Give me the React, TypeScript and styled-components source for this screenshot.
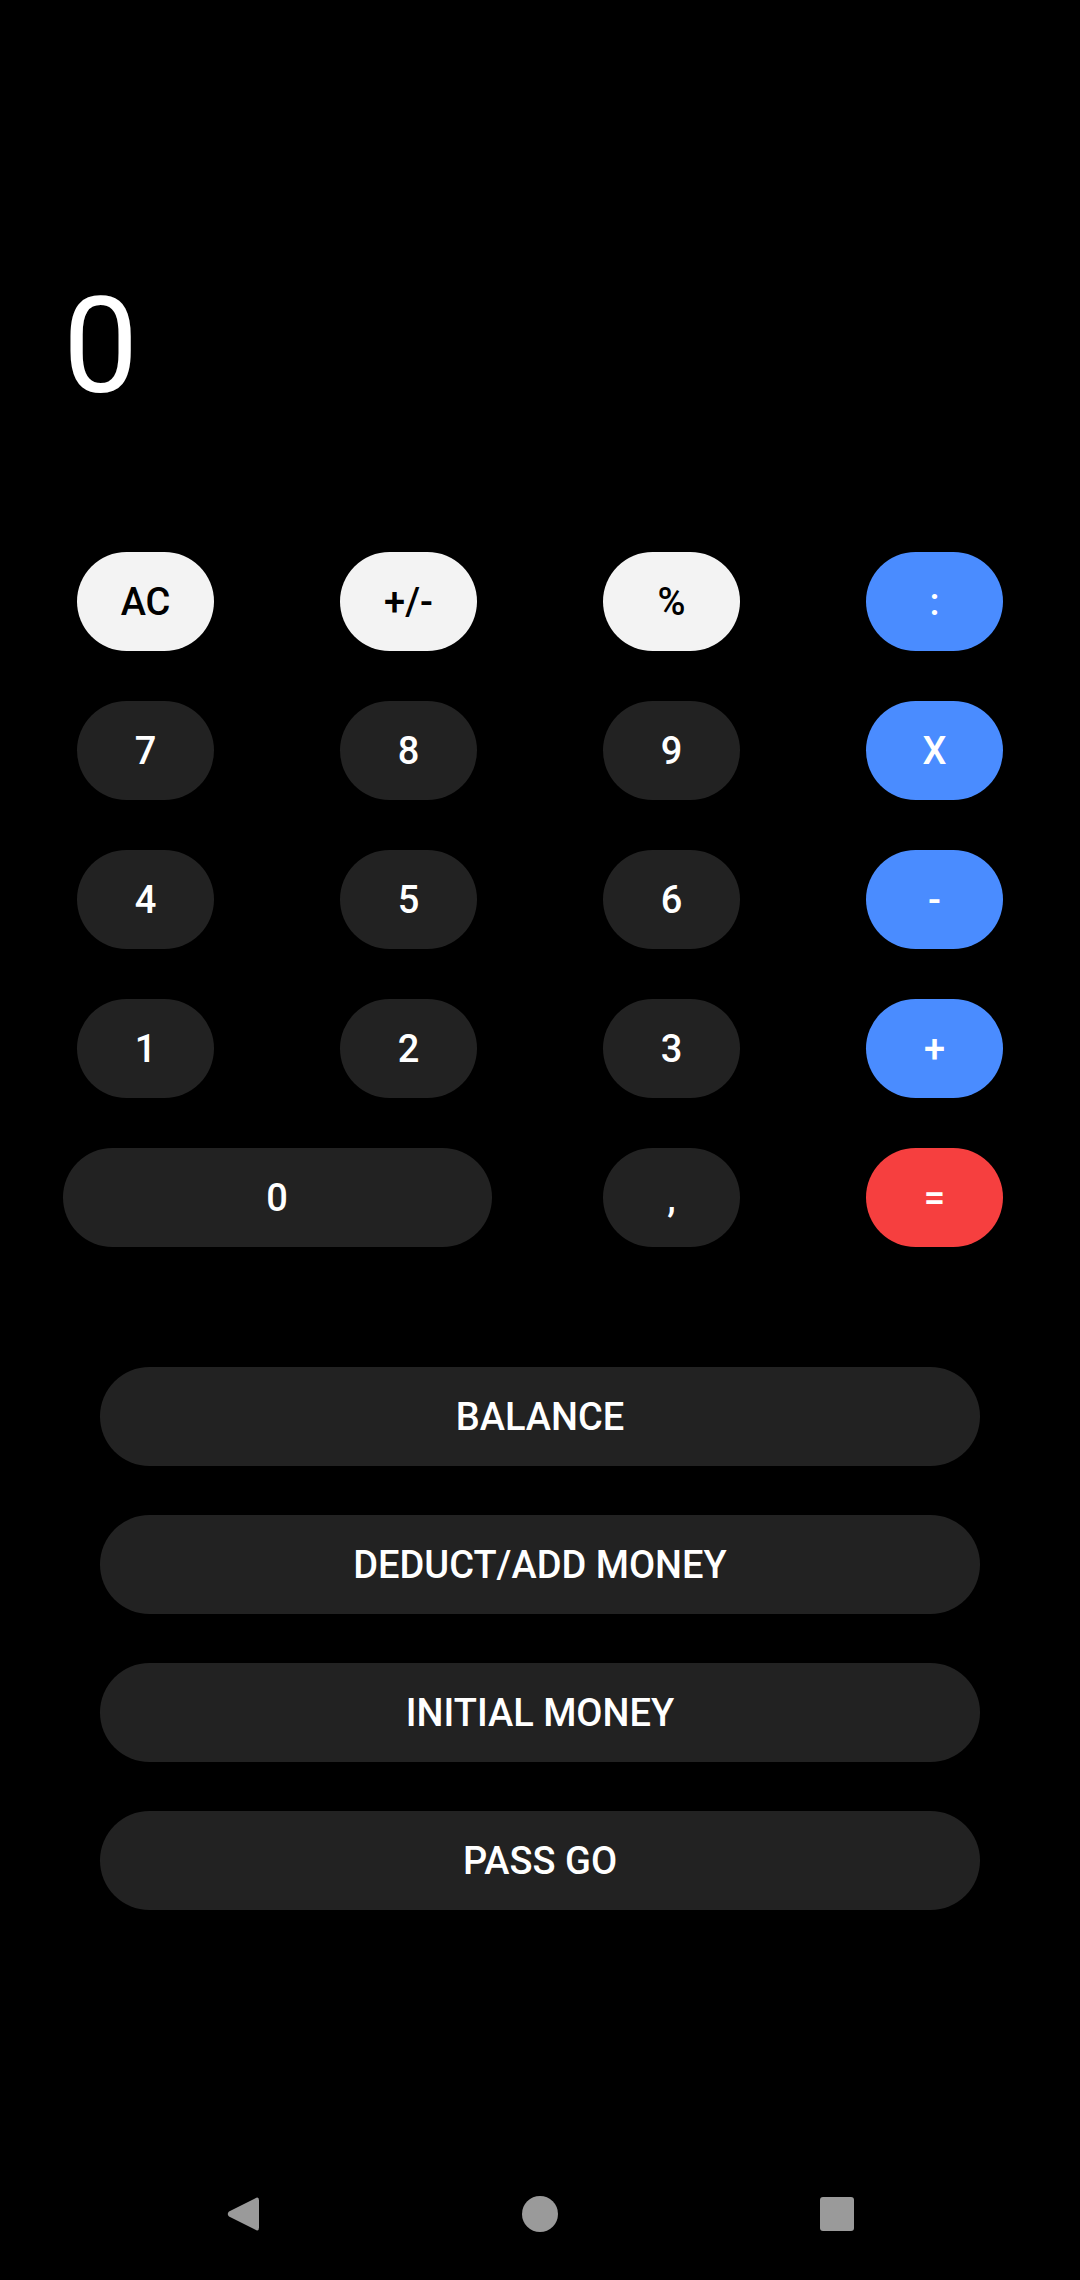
import React from "react";
import styled, { createGlobalStyle } from "styled-components";

const GlobalStyle = createGlobalStyle`
  html, body {
    margin: 0;
    padding: 0;
    background: #000000;
  }
  body {
    font-family: Roboto, "Noto Sans", "Liberation Sans", sans-serif;
  }
  * { box-sizing: border-box; }
`;

const Screen = styled.div`
  width: 1080px;
  height: 2280px;
  background: #000000;
  display: flex;
  flex-direction: column;
  overflow: hidden;
`;

const Display = styled.div`
  padding: 280px 0 0 63px;
  height: 414px;
  font-size: 134px;
  line-height: 1;
  font-weight: 400;
  color: #ffffff;
`;

const Keypad = styled.div`
  margin-top: 138px;
  padding: 0 14px;
  display: grid;
  grid-template-columns: repeat(4, 263px);
  grid-auto-rows: 99px;
  row-gap: 50px;
`;

type Variant = "light" | "dark" | "blue" | "red";

const palette: Record<Variant, { bg: string; fg: string }> = {
  light: { bg: "#f3f3f3", fg: "#000000" },
  dark: { bg: "#222222", fg: "#ffffff" },
  blue: { bg: "#4a8cff", fg: "#ffffff" },
  red: { bg: "#f63f3f", fg: "#ffffff" },
};

const Key = styled.button<{ $variant: Variant; $wide?: boolean }>`
  justify-self: center;
  grid-column: ${(p) => (p.$wide ? "span 2" : "auto")};
  width: ${(p) => (p.$wide ? "429px" : "137px")};
  height: 99px;
  border: none;
  border-radius: 50px;
  padding: 0;
  background: ${(p) => palette[p.$variant].bg};
  color: ${(p) => palette[p.$variant].fg};
  font-family: Roboto, "Noto Sans", "Liberation Sans", sans-serif;
  font-size: 38px;
  font-weight: 500;
  display: flex;
  align-items: center;
  justify-content: center;
`;

const Actions = styled.div`
  margin-top: 120px;
  display: flex;
  flex-direction: column;
  align-items: center;
  gap: 49px;
`;

const ActionButton = styled.button`
  width: 880px;
  height: 99px;
  border: none;
  border-radius: 50px;
  background: #222222;
  color: #ffffff;
  font-family: Roboto, "Noto Sans", "Liberation Sans", sans-serif;
  font-size: 38px;
  font-weight: 500;
  display: flex;
  align-items: center;
  justify-content: center;
`;

const NavBar = styled.div`
  margin-top: auto;
  height: 132px;
  display: flex;
  align-items: center;
  justify-content: center;
  gap: 197px;
`;

const NavSlot = styled.div`
  width: 100px;
  display: flex;
  align-items: center;
  justify-content: center;
`;

const keys: { label: string; variant: Variant; wide?: boolean }[] = [
  { label: "AC", variant: "light" },
  { label: "+/-", variant: "light" },
  { label: "%", variant: "light" },
  { label: ":", variant: "blue" },
  { label: "7", variant: "dark" },
  { label: "8", variant: "dark" },
  { label: "9", variant: "dark" },
  { label: "X", variant: "blue" },
  { label: "4", variant: "dark" },
  { label: "5", variant: "dark" },
  { label: "6", variant: "dark" },
  { label: "-", variant: "blue" },
  { label: "1", variant: "dark" },
  { label: "2", variant: "dark" },
  { label: "3", variant: "dark" },
  { label: "+", variant: "blue" },
  { label: "0", variant: "dark", wide: true },
  { label: ",", variant: "dark" },
  { label: "=", variant: "red" },
];

const actions = ["BALANCE", "DEDUCT/ADD MONEY", "INITIAL MONEY", "PASS GO"];

export default function App() {
  return (
    <>
      <GlobalStyle />
      <Screen>
        <Display>0</Display>
        <Keypad>
          {keys.map((k) => (
            <Key key={k.label} $variant={k.variant} $wide={k.wide}>
              {k.label}
            </Key>
          ))}
        </Keypad>
        <Actions>
          {actions.map((a) => (
            <ActionButton key={a}>{a}</ActionButton>
          ))}
        </Actions>
        <NavBar>
          <NavSlot>
            <svg width="34" height="38" viewBox="0 0 34 38">
              <path
                d="M29 3.5 Q33 1 33 5.5 L33 32.5 Q33 37 29 34.5 L3 21.5 Q0.5 19 3 16.5 Z"
                fill="#9a9a9a"
              />
            </svg>
          </NavSlot>
          <NavSlot>
            <svg width="36" height="36" viewBox="0 0 36 36">
              <circle cx="18" cy="18" r="18" fill="#9a9a9a" />
            </svg>
          </NavSlot>
          <NavSlot>
            <svg width="34" height="34" viewBox="0 0 34 34">
              <rect x="0" y="0" width="34" height="34" rx="3" fill="#9a9a9a" />
            </svg>
          </NavSlot>
        </NavBar>
      </Screen>
    </>
  );
}
